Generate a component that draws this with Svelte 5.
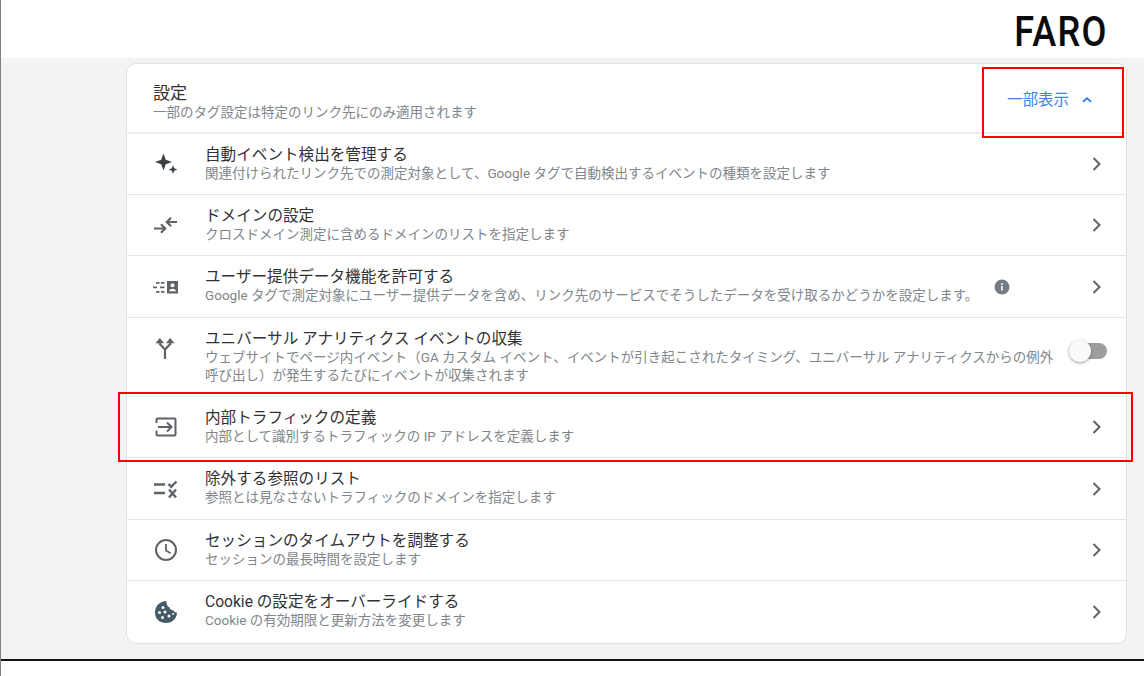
<script>
  const rows = [
    { icon: 'spark', title: '自動イベント検出を管理する', sub: '関連付けられたリンク先での測定対象として、Google タグで自動検出するイベントの種類を設定します', h: 61 },
    { icon: 'merge', title: 'ドメインの設定', sub: 'クロスドメイン測定に含めるドメインのリストを指定します', h: 61 },
    { icon: 'data', title: 'ユーザー提供データ機能を許可する', sub: 'Google タグで測定対象にユーザー提供データを含め、リンク先のサービスでそうしたデータを受け取るかどうかを設定します。', h: 62, info: true },
    { icon: 'fork', title: 'ユニバーサル アナリティクス イベントの収集', sub: 'ウェブサイトでページ内イベント（GA カスタム イベント、イベントが引き起こされたタイミング、ユニバーサル アナリティクスからの例外呼び出し）が発生するたびにイベントが収集されます', h: 79, toggle: true },
    { icon: 'input', title: '内部トラフィックの定義', sub: '内部として識別するトラフィックの IP アドレスを定義します', h: 61 },
    { icon: 'list', title: '除外する参照のリスト', sub: '参照とは見なさないトラフィックのドメインを指定します', h: 62 },
    { icon: 'clock', title: 'セッションのタイムアウトを調整する', sub: 'セッションの最長時間を設定します', h: 61 },
    { icon: 'cookie', title: 'Cookie の設定をオーバーライドする', sub: 'Cookie の有効期限と更新方法を変更します', h: 61 }
  ];
</script>

<div class="page">
  <header class="top"><span class="logo">FARO</span></header>
  <main class="band">
    <section class="card">
      <div class="head">
        <div class="text">
          <div class="title big">設定</div>
          <div class="sub">一部のタグ設定は特定のリンク先にのみ適用されます</div>
        </div>
        <div class="less">
          <span>一部表示</span>
          <svg class="up-chev" width="12" height="12" viewBox="0 0 12 12"><path d="M2 7.800 6 4.200l4 3.600" fill="none" stroke="#1a73e8" stroke-width="1.600"/></svg>
        </div>
        <div class="mark markhead"></div>
      </div>
      {#each rows as r}
        <div class="row" style="height:{r.h}px">
          <div class="ico" class:up={r.toggle}>
            <svg width="24" height="24" viewBox="0 0 24 24" fill="#5f6368">
              {#if r.icon === 'spark'}
                <path fill="#3c4043" d="M10.500 1.500 12.800 7.700 19 10 12.800 12.300 10.500 18.500 8.200 12.300 2 10 8.200 7.700zM20 13.200l1.200 3.100 3.100 1.200-3.100 1.200-1.200 3.100-1.200-3.100-3.100-1.200 3.100-1.200z"/>
              {:else if r.icon === 'merge'}
                <path fill="none" stroke="#5f6368" stroke-width="2.200" d="M1 15.500h11M8 11.300l4.200 4.200L8 19.700M24 9H13.500M18 4.800 13.800 9l4.200 4.200"/>
              {:else if r.icon === 'data'}
                <path d="M14 6h11v12.500H14z" fill="#5f6368"/>
                <circle cx="19.500" cy="10.300" r="2" fill="#fff"/>
                <path d="M16 16.200c.3-1.700 1.900-2.500 3.500-2.500s3.200.8 3.500 2.500z" fill="#fff"/>
                <path d="M3 7h3.500v1.700H3zM8 7h3.500v1.700H8zM0 11.500h4v1.700H0zM7 11.500h4.500v1.700H7zM3 16h3.500v1.700H3zM8 16h3.500v1.700H8z"/>
              {:else if r.icon === 'fork'}
                <path fill="none" stroke="#5f6368" stroke-width="2.200" d="M12 23v-9.500M12 13.500 6.800 8V4M12 13.500 17.200 8V4"/>
                <path d="M2.500 7.200 6.800 2l4.300 5.200zM12.900 7.200 17.200 2l4.300 5.200z" fill="#5f6368"/>
              {:else if r.icon === 'input'}
                <path fill="none" stroke="#5f6368" stroke-width="2" d="M3.500 8V4.500a1 1 0 0 1 1-1h17a1 1 0 0 1 1 1v15a1 1 0 0 1-1 1h-17a1 1 0 0 1-1-1V15.500M5 12h13.500M14 7.500l4.500 4.500-4.500 4.500"/>
              {:else if r.icon === 'list'}
                <path fill="none" stroke="#5f6368" stroke-width="2.400" d="M1 7.500h11M1 16h11M15.500 7l2.700 2.700L23.500 4.500M16 12.500l7 8M23 12.500l-7 8"/>
              {:else if r.icon === 'clock'}
                <circle cx="13" cy="12" r="10" fill="none" stroke="#5f6368" stroke-width="2"/>
                <path d="M13 6v6.500l4.500 2.700" fill="none" stroke="#5f6368" stroke-width="1.800"/>
              {:else}
                <path fill="#455a64" d="M13.500 1C7 1 2 6 2 12.500S7 23 13 23c6.500 0 11-5 11-10.500-1.800.3-3-.7-3.500-2.300-2 .3-4-1-4.200-3.200C15 7.500 13.300 4.500 13.500 1z"/>
                <g fill="#fff"><circle cx="10" cy="7.500" r="1.500"/><circle cx="6.500" cy="12.500" r="1.500"/><circle cx="12" cy="12" r="1.500"/><circle cx="9.500" cy="17.500" r="1.500"/><circle cx="16" cy="16" r="1.500"/><circle cx="20" cy="14" r="1"/></g>
              {/if}
            </svg>
          </div>
          <div class="text grow">
            <div class="title">{r.title}</div>
            <div class="sub">{r.sub}</div>
          </div>
          {#if r.info}
            <svg class="info" width="16" height="16" viewBox="0 0 16 16"><circle cx="8" cy="8" r="7.500" fill="#757b82"/><path d="M7.200 7h1.600v4.500H7.200zM7.200 4.300h1.600v1.600H7.200z" fill="#fff"/></svg>
          {/if}
          {#if r.toggle}
            <div class="toggle"><span class="knob"></span></div>
          {:else}
            <svg class="chev" width="12" height="16" viewBox="0 0 12 16"><path d="M2.500 2 8.500 8l-6 6" fill="none" stroke="#5f6368" stroke-width="2"/></svg>
          {/if}
          {#if r.icon === 'input'}<div class="mark markrow"></div>{/if}
        </div>
      {/each}
    </section>
  </main>
</div>

<style>
  :global(body) { margin: 0; background: #fff; }
  .page {
    width: 1144px; height: 676px; box-sizing: border-box; overflow: hidden;
    border-left: 1px solid #7f7f7f;
    font-family: Roboto, "Noto Sans CJK JP", sans-serif;
    display: flex; flex-direction: column;
  }
  .top { height: 58px; flex: none; background: #fff; display: flex; justify-content: flex-end; align-items: flex-start; padding-right: 36px; box-sizing: border-box; }
  .logo { font-family: Roboto, sans-serif; font-size: 42px; line-height: 42px; margin-top: 11px; color: #0b0b0b; font-weight: 500; letter-spacing: 1.500px; transform: scaleX(.86); transform-origin: right; }
  .band { height: 603px; flex: none; box-sizing: border-box; background: #f1f3f4; padding: 5px 0 0 125px; border-bottom: 2px solid #111; }
  .card { width: 1001px; box-sizing: border-box; height: 581px; background: #fff; border: 1px solid #dfe1e5; border-radius: 10px; position: relative; }
  .head { height: 70px; box-sizing: border-box; padding: 8px 26px 0; display: flex; align-items: center; position: relative; border-bottom: 2px solid #ebedef; }
  .text { flex: 1; min-width: 0; }
  .title { font-size: 15.600px; line-height: 17px; color: #303134; }
  .title.big { font-size: 17px; line-height: 19px; }
  .sub { font-size: 13.500px; line-height: 18px; color: #80868b; }
  .less { display: flex; align-items: center; gap: 12px; color: #3b82ee; font-size: 15.500px; padding-right: 7px; margin-top: -8px; }
  .up-chev { margin-top: 4px; }
  .row { box-sizing: border-box; display: flex; align-items: center; padding: 0 19px 0 26px; border-bottom: 1px solid #e3e5e7; position: relative; }
  .row:last-child { border-bottom: 0; }
  .ico { width: 26px; height: 24px; margin-right: 26px; flex: none; }
  .ico svg { overflow: visible; }
  .ico.up { margin-bottom: 18px; }
  .grow { padding-right: 10px; }
  .info { margin: 0 81px 0 0; flex: none; }
  .chev { flex: none; margin-right: 4px; }
  .toggle { width: 38px; height: 16px; background: #9e9e9e; border-radius: 8px; position: relative; flex: none; margin: -13px 0 0 0; }
  .knob { position: absolute; left: 0; top: -3px; width: 22px; height: 22px; border-radius: 50%; background: #fafafa; box-shadow: 0 1px 3px rgba(0,0,0,.4); }
  .mark { position: absolute; border: 2px solid #f00; pointer-events: none; box-sizing: border-box; }
  .markhead { left: 855px; top: 3px; width: 142px; height: 71px; }
  .markrow { left: -9px; top: -5px; width: 1015px; height: 70px; }
</style>
